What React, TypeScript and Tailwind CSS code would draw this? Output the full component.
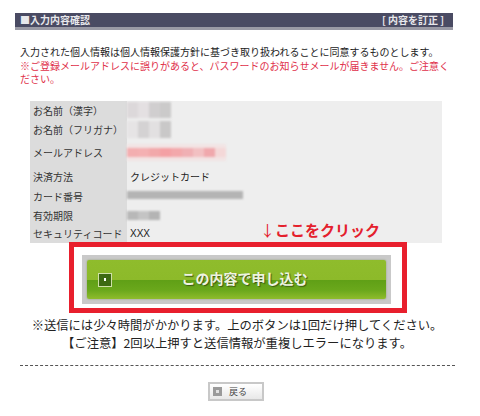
import React from 'react';

const font = "font-['Noto_Sans_CJK_JP','Liberation_Sans',sans-serif]";

// mosaic blocks standing in for the blurred personal data
function Mosaic({ colors, h = 'h-[8px]', className = '' }: { colors: string[]; h?: string; className?: string }) {
  return (
    <div className={`flex blur-[1px] ${className}`}>
      {colors.map((c, i) => (
        <div key={i} className={`w-[11px] ${h}`} style={{ backgroundColor: c }} />
      ))}
    </div>
  );
}

function Row({ label, h, children }: { label: string; h: string; children?: React.ReactNode }) {
  return (
    <div className={`flex items-center ${h}`}>
      <div className="w-[97px] h-full shrink-0 bg-[#dcdcdc] pl-[3px] flex items-center text-[10px] text-[#333] whitespace-nowrap">
        {label}
      </div>
      <div className="flex-1 flex items-center h-full">{children}</div>
    </div>
  );
}

export default function App() {
  return (
    <div className={`w-[480px] h-[416px] bg-white overflow-hidden pt-[13px] ${font}`}>
      {/* Section header */}
      <div className="ml-[15px] w-[438px] h-[17px] bg-[#4a4b63] border-b-[3px] border-[#9a9aa5] flex items-center justify-between pl-[5px] pr-[9px] text-[10px] font-bold text-[#e8e8ec] leading-none">
        <span>■入力内容確認</span>
        <span>[ 内容を訂正 ]</span>
      </div>

      {/* Consent text */}
      <div className="ml-[20px] mt-[15px] w-[430px] text-[10px] leading-[13.5px]">
        <p className="text-[#222]">入力された個人情報は個人情報保護方針に基づき取り扱われることに同意するものとします。</p>
        <p className="text-[#e0304a]">※ご登録メールアドレスに誤りがあると、パスワードのお知らせメールが届きません。ご注意ください。</p>
      </div>

      {/* Confirm table */}
      <div className="ml-[30px] mt-[15px] w-[412px] bg-[#eeeeee] flex flex-col">
        <Row label="お名前（漢字）" h="h-[19px]">
          <Mosaic colors={['#dcd8da', '#e4e0e2', '#d0cecf', '#cbcaca']} h="h-[16px]" />
        </Row>
        <Row label="お名前（フリガナ）" h="h-[20px]">
          <Mosaic colors={['#e6e4e5', '#d4d2d3', '#e2e0e1', '#c9c8c8']} h="h-[17px]" />
        </Row>
        <Row label="メールアドレス" h="h-[26px]">
          <Mosaic
            colors={['#f3aeb0', '#f4b0b2', '#f2a8aa', '#f4a0a4', '#f3a8ab', '#f0b0b4', '#f2c0c2', '#f0a8ac', '#f4d8d8']}
            h="h-[9px]"
            className="py-[4px] bg-[#f2e4e4]"
          />
        </Row>
        <Row label="決済方法" h="h-[21px]">
          <span className="pl-[3px] text-[10px] text-[#222]">クレジットカード</span>
        </Row>
        <Row label="カード番号" h="h-[19px]">
          <div className="w-[116px] h-[8px] bg-[#b4b4b4] blur-[1px] -mt-[2px]" />
        </Row>
        <Row label="有効期限" h="h-[19px]">
          <Mosaic colors={['#b8b8b8', '#c4c4c4', '#b4b4b4']} h="h-[9px]" />
        </Row>
        <Row label="セキュリティコード" h="h-[18px]">
          <div className="flex-1 flex items-center justify-between pl-[3px] pr-[63px]">
            <span className="text-[10px] text-[#222] font-['Liberation_Sans',sans-serif]">XXX</span>
            <span className="text-[15px] font-bold text-[#e4202c] leading-none -mt-[9px] -mr-[1px]">
              <span className="font-normal">↓</span>ここをクリック
            </span>
          </div>
        </Row>
      </div>

      {/* Red highlight around the submit button */}
      <div className="ml-[69px] -mt-[1px] relative w-[338px] h-[71px] border-[5px] border-[#e81f2d] bg-white pl-[8px] pt-[8px]">
        <div className="w-[309px] h-[49px] bg-[#c9c9c9] p-[5px]">
          <div className="relative w-full h-full rounded-[2px] flex items-center justify-center pl-[16px] bg-[linear-gradient(to_bottom,#8fbc2c_0%,#8dba2a_50%,#5f9f16_50%,#6ba81c_78%,#8fbc2c_100%)] shadow-[0_0_2px_#8a9a6a]">
            <div className="absolute left-[11px] top-[13px] w-[14px] h-[14px] bg-[#3d6a12] border border-[#cfe0a8] flex items-center justify-center">
              <div className="w-[2px] h-[3px] bg-white" />
            </div>
            <span className="text-[14px] font-bold text-[#eef3e0] [text-shadow:1px_1px_1px_#3d5a10] -mt-[2px]">この内容で申し込む</span>
          </div>
        </div>
      </div>

      {/* Notes */}
      <div className="mt-[3px] pr-[6px] text-center text-[12.3px] leading-[18.5px] text-[#222]">
        <p>※送信には少々時間がかかります。上のボタンは1回だけ押してください。</p>
        <p>【ご注意】2回以上押すと送信情報が重複しエラーになります。</p>
      </div>

      <div className="ml-[20px] mt-[12px] w-[435px] border-t border-dashed border-[#555]" />

      {/* Back button */}
      <div className="flex justify-center mt-[16px] pr-[8px]">
        <div className="w-[56px] h-[19px] bg-[#c8c8c8] p-[2px]">
          <div className="w-full h-full bg-[linear-gradient(to_bottom,#ffffff,#e8e8e8)] flex items-center pl-[3px] gap-[7px]">
            <div className="w-[9px] h-[9px] bg-[#9a9a9a] flex items-center justify-center">
              <div className="w-[3px] h-[3px] bg-[#e0e0e0]" />
            </div>
            <span className="text-[9px] text-[#444] leading-none">戻る</span>
          </div>
        </div>
      </div>
    </div>
  );
}
